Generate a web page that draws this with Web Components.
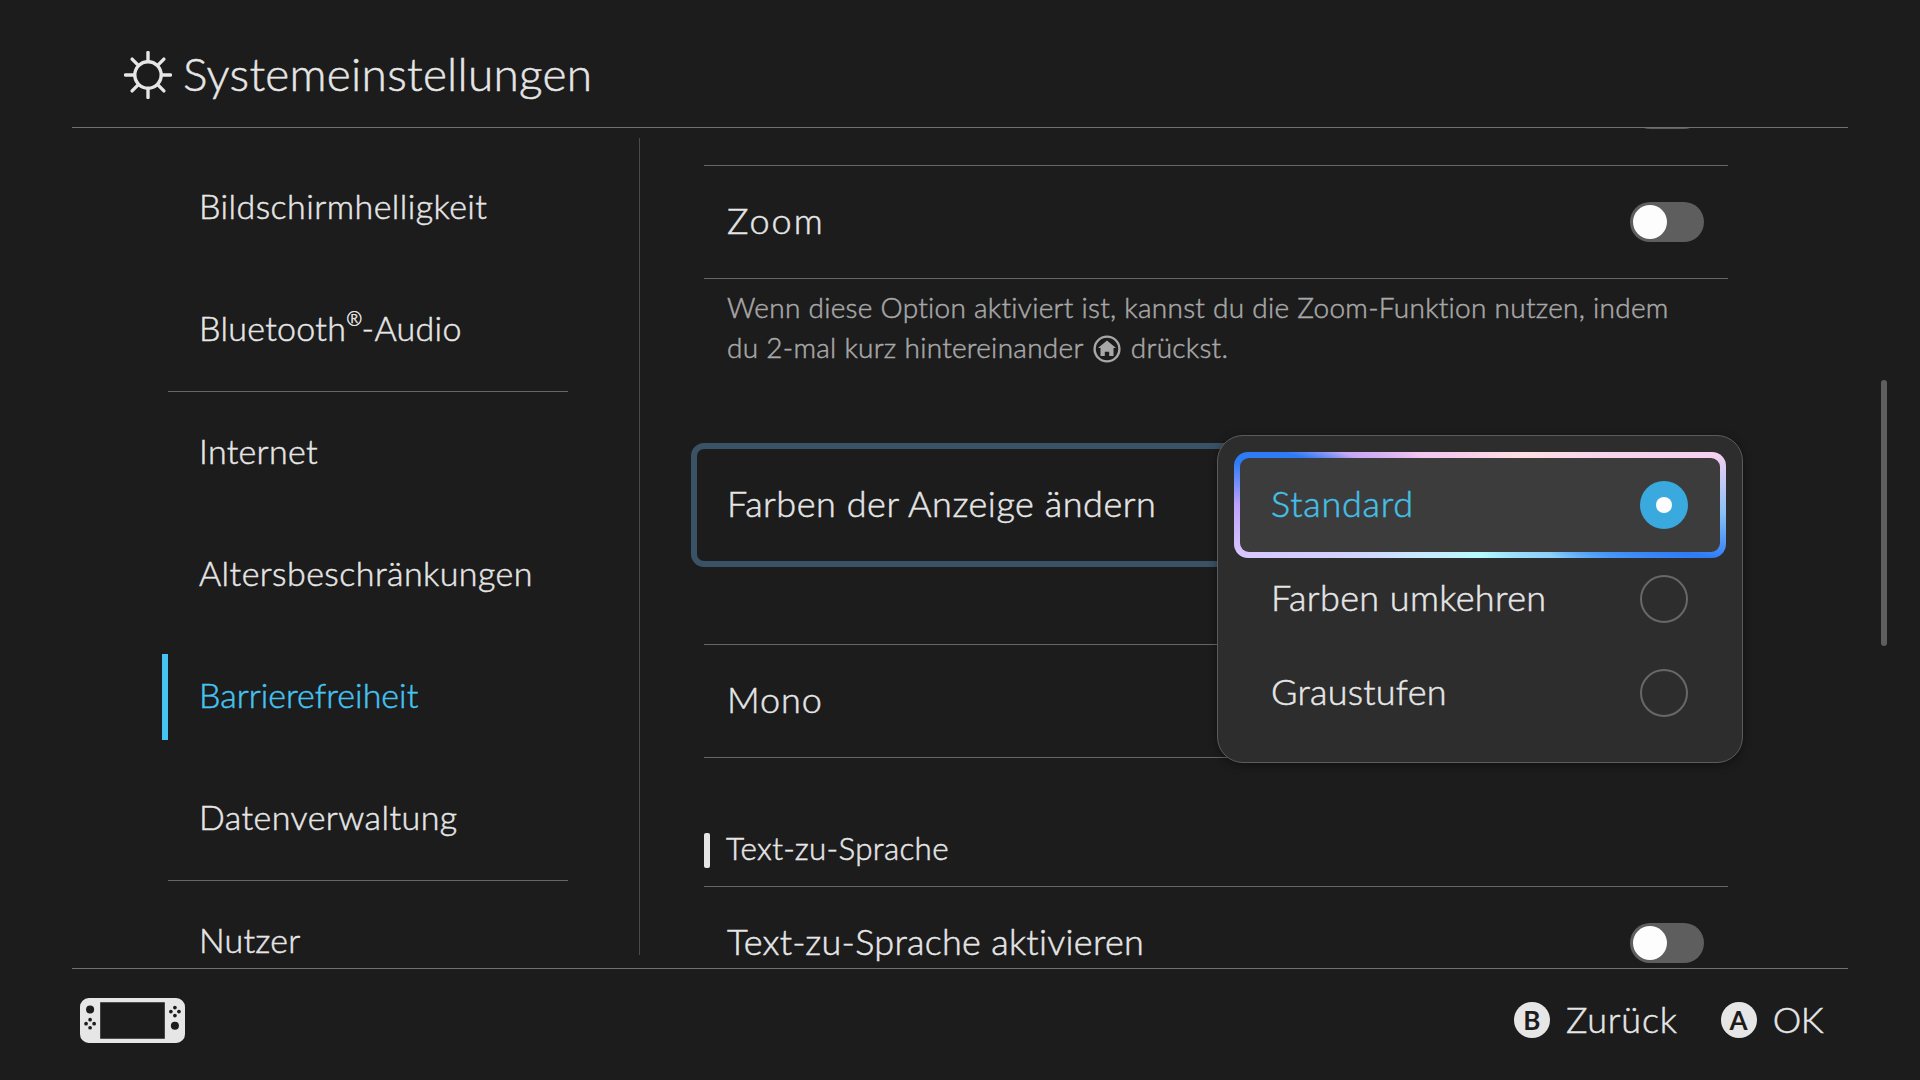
<!DOCTYPE html>
<html lang="de">
<head>
<meta charset="utf-8">
<title>Systemeinstellungen</title>
<style>
  html, body { margin: 0; padding: 0; background: #1c1c1c; }
  body { width: 1920px; height: 1080px; overflow: hidden; font-family: "Lato", "Noto Sans", sans-serif; font-weight: 300; -webkit-text-stroke: .5px; color: #e6e6e6; }
</style>
</head>
<body>
<sw-app>
  <sw-header slot="header">Systemeinstellungen</sw-header>
  <sw-sidebar slot="sidebar">
    <sw-side-item>Bildschirmhelligkeit</sw-side-item>
    <sw-side-item divider style="letter-spacing:.3px">Bluetooth<sup style="font-size:.56em;line-height:0;vertical-align:15px;margin-right:-1px">®</sup>-Audio</sw-side-item>
    <sw-side-item style="letter-spacing:.3px">Internet</sw-side-item>
    <sw-side-item>Altersbeschränkungen</sw-side-item>
    <sw-side-item active style="letter-spacing:0">Barrierefreiheit</sw-side-item>
    <sw-side-item divider>Datenverwaltung</sw-side-item>
    <sw-side-item style="letter-spacing:.2px">Nutzer</sw-side-item>
  </sw-sidebar>
  <sw-list slot="content">
    <sw-row toggle class="peek"></sw-row>
    <sw-row toggle class="zoom" style="letter-spacing:2px">Zoom</sw-row>
    <sw-note>Wenn diese Option aktiviert ist, kannst du die Zoom-Funktion nutzen, indem<br>du 2-mal kurz hintereinander <sw-home-icon></sw-home-icon> drückst.</sw-note>
    <sw-focus-row style="letter-spacing:.54px">Farben der Anzeige ändern</sw-focus-row>
    <sw-row class="mono" style="letter-spacing:.9px">Mono</sw-row>
    <sw-section>Text-zu-Sprache</sw-section>
    <sw-row toggle class="last" style="letter-spacing:.28px">Text-zu-Sprache aktivieren</sw-row>
  </sw-list>
  <sw-footer slot="footer">
    <sw-hint key="B" style="letter-spacing:.8px">Zurück</sw-hint>
    <sw-hint key="A" style="letter-spacing:-.5px">OK</sw-hint>
  </sw-footer>
  <sw-popup slot="overlay">
    <sw-option selected style="letter-spacing:.75px">Standard</sw-option>
    <sw-option style="letter-spacing:.4px">Farben umkehren</sw-option>
    <sw-option style="letter-spacing:.25px">Graustufen</sw-option>
  </sw-popup>
</sw-app>

<script>
class SwApp extends HTMLElement {
  constructor() {
    super();
    this.attachShadow({mode: 'open'});
    this.shadowRoot.innerHTML = `
      <style>
        :host { display: flex; flex-direction: column; position: relative; width: 1920px; height: 1080px; }
        main { display: flex; height: 840px; margin: 0 72px; overflow: hidden; }
        .side { width: 567px; flex: none; }
        .divider { width: 1px; flex: none; margin: 10px 0 13px; background: #4a4a4a; }
        .content { flex: none; width: 1024px; margin-left: 64px; }
        .scrollbar { position: absolute; left: 1881px; top: 380px; width: 6px; height: 266px; border-radius: 3px; background: #5e5e5e; }
      </style>
      <slot name="header"></slot>
      <main>
        <div class="side"><slot name="sidebar"></slot></div>
        <div class="divider"></div>
        <div class="content"><slot name="content"></slot></div>
      </main>
      <slot name="footer"></slot>
      <div class="scrollbar"></div>
      <slot name="overlay"></slot>
    `;
  }
}

class SwHeader extends HTMLElement {
  constructor() {
    super();
    this.attachShadow({mode: 'open'});
    var rays = '';
    for (var i = 0; i < 8; i++) {
      rays += `<line x1="24" y1="1.5" x2="24" y2="10" transform="rotate(${i * 45} 24 24)"/>`;
    }
    this.shadowRoot.innerHTML = `
      <style>
        :host { display: flex; align-items: center; gap: 11px; box-sizing: border-box; height: 128px; margin: 0 72px; padding: 25px 0 0 52px; border-bottom: 1px solid #707070; }
        svg { width: 48px; height: 48px; flex: none; margin-top: -3px; }
        .title { font-size: 46px; letter-spacing: .25px; color: #e6e6e6; margin-top: -6px; }
      </style>
      <svg viewBox="0 0 48 48" fill="none" stroke="#e6e6e6" stroke-width="3.4" stroke-linecap="round">
        <circle cx="24" cy="24" r="13.2"/>
        ${rays}
      </svg>
      <div class="title"><slot></slot></div>
    `;
  }
}

class SwSidebar extends HTMLElement {
  constructor() {
    super();
    this.attachShadow({mode: 'open'});
    this.shadowRoot.innerHTML = `
      <style>
        :host { display: block; width: 400px; margin-left: 96px; padding-top: 19px; letter-spacing: .45px; }
      </style>
      <slot></slot>
    `;
  }
}

class SwSideItem extends HTMLElement {
  constructor() {
    super();
    this.attachShadow({mode: 'open'});
    this.shadowRoot.innerHTML = `
      <style>
        :host { display: flex; align-items: center; position: relative; box-sizing: border-box; height: 122px; padding-left: 31px; font-size: 34px; color: #e6e6e6; }
        :host([divider]) { height: 123px; border-bottom: 1px solid #666; }
        :host([active]) { color: #45c3f2; }
        :host([active])::before { content: ""; position: absolute; left: -6px; top: 18px; width: 6px; height: 86px; background: #45c3f2; }
        .label { margin-bottom: 6px; }
      </style>
      <div class="label"><slot></slot></div>
    `;
  }
}

class SwToggle extends HTMLElement {
  constructor() {
    super();
    this.attachShadow({mode: 'open'});
    this.shadowRoot.innerHTML = `
      <style>
        :host { display: block; box-sizing: border-box; width: 74px; height: 40px; padding: 3px; border-radius: 20px; background: #5e5e5e; }
        .knob { width: 34px; height: 34px; border-radius: 50%; background: #fdfdfd; }
      </style>
      <div class="knob"></div>
    `;
  }
}

class SwList extends HTMLElement {
  constructor() {
    super();
    this.attachShadow({mode: 'open'});
    this.shadowRoot.innerHTML = `
      <style>
        :host { display: block; margin-top: -76px; }
      </style>
      <slot></slot>
    `;
  }
}

class SwRow extends HTMLElement {
  constructor() {
    super();
    this.attachShadow({mode: 'open'});
    var toggle = this.hasAttribute('toggle') ? '<sw-toggle></sw-toggle>' : '';
    this.shadowRoot.innerHTML = `
      <style>
        :host { display: flex; align-items: center; justify-content: space-between; box-sizing: border-box; height: 114px; padding: 0 24px 0 23px; border-bottom: 1px solid #666; font-size: 36px; color: #e6e6e6; }
        :host(.zoom) { height: 113px; }
        :host(.mono) { border-top: 1px solid #666; }
        :host(.last) { padding-bottom: 2px; }
        .label { margin-bottom: 4px; }
      </style>
      <div class="label"><slot></slot></div>
      ${toggle}
    `;
  }
}

class SwNote extends HTMLElement {
  constructor() {
    super();
    this.attachShadow({mode: 'open'});
    this.shadowRoot.innerHTML = `
      <style>
        :host { display: block; box-sizing: border-box; height: 164px; padding: 8px 23px 0; font-size: 28px; line-height: 40px; letter-spacing: .28px; color: #a8a8a8; }
      </style>
      <slot></slot>
    `;
  }
}

class SwHomeIcon extends HTMLElement {
  constructor() {
    super();
    this.attachShadow({mode: 'open'});
    this.shadowRoot.innerHTML = `
      <style>
        :host { display: inline-block; width: 28px; height: 28px; margin: 0 2px 0 2px; vertical-align: -5px; }
        svg { display: block; width: 28px; height: 28px; }
      </style>
      <svg viewBox="0 0 28 28">
        <circle cx="14" cy="14" r="12.4" fill="none" stroke="#a8a8a8" stroke-width="2.4"/>
        <path d="M14 5.5 L23 13 L20.5 13 L20.5 21 L16.2 21 L16.2 16.8 L11.8 16.8 L11.8 21 L7.5 21 L7.5 13 L5 13 Z" fill="#a8a8a8"/>
      </svg>
    `;
  }
}

class SwFocusRow extends HTMLElement {
  constructor() {
    super();
    this.attachShadow({mode: 'open'});
    this.shadowRoot.innerHTML = `
      <style>
        :host { display: flex; align-items: center; box-sizing: border-box; width: 1050px; height: 124px; margin: 0 0 77px -13px; padding-left: 30px; border: 6px solid #3a5266; border-radius: 13px; font-size: 36px; color: #e6e6e6; }
        .label { margin-bottom: 4px; }
      </style>
      <div class="label"><slot></slot></div>
    `;
  }
}

class SwSection extends HTMLElement {
  constructor() {
    super();
    this.attachShadow({mode: 'open'});
    this.shadowRoot.innerHTML = `
      <style>
        :host { display: flex; align-items: center; box-sizing: border-box; height: 129px; padding-top: 56px; border-bottom: 1px solid #666; font-size: 31.4px; letter-spacing: .33px; color: #e6e6e6; }
        .bar { width: 6px; height: 35px; margin-right: 16px; border-radius: 2px; background: #e6e6e6; }
        .label { margin-bottom: 5px; }
      </style>
      <div class="bar"></div>
      <div class="label"><slot></slot></div>
    `;
  }
}

class SwPopup extends HTMLElement {
  constructor() {
    super();
    this.attachShadow({mode: 'open'});
    this.shadowRoot.innerHTML = `
      <style>
        :host { display: block; position: absolute; left: 1217px; top: 435px; box-sizing: border-box; width: 526px; height: 328px; padding: 16px; background: #2d2d2d; border: 1px solid #5c5c5c; border-radius: 26px; box-shadow: 0 2px 10px rgba(0,0,0,.4); }
      </style>
      <slot></slot>
    `;
  }
}

class SwOption extends HTMLElement {
  constructor() {
    super();
    this.attachShadow({mode: 'open'});
    this.shadowRoot.innerHTML = `
      <style>
        :host { display: block; box-sizing: border-box; height: 94px; font-size: 36px; color: #e6e6e6; }
        .inner { display: flex; align-items: center; justify-content: space-between; box-sizing: border-box; height: 100%; padding: 0 38px 0 37px; }
        .label { margin-bottom: 4px; }
        .radio { box-sizing: border-box; width: 48px; height: 48px; border: 2.5px solid #686868; border-radius: 50%; }
        :host([selected]) { height: 106px; margin-bottom: -6px; padding: 6px; border-radius: 14px; color: #44c0e8;
          background: conic-gradient(from 0deg, #f9d3e8 0deg, #ffdfe2 45deg, #f5d0f0 78deg, #88c0f8 92deg, #2e7bf6 103deg, #4a9af8 112deg, #8cd0fb 125deg, #b5fcff 180deg, #c8e8ff 235deg, #d8c8ff 258deg, #bfa2fb 270deg, #2e7bf6 280deg, #2e7bf6 285deg, #c9a8f5 291deg, #f3c6ef 309deg, #f9d3e8 360deg); }
        :host([selected]) .inner { padding: 0 32px 0 31px; background: #3c3c3c; border-radius: 9px; }
        :host([selected]) .radio { display: flex; align-items: center; justify-content: center; border: 0; background: #3aa9dd; }
        :host([selected]) .radio::after { content: ""; width: 16px; height: 16px; border-radius: 50%; background: #fff; }
      </style>
      <div class="inner"><div class="label"><slot></slot></div><div class="radio"></div></div>
    `;
  }
}

class SwFooter extends HTMLElement {
  constructor() {
    super();
    this.attachShadow({mode: 'open'});
    this.shadowRoot.innerHTML = `
      <style>
        :host { display: flex; align-items: center; justify-content: space-between; box-sizing: border-box; height: 112px; margin: 0 72px; padding: 0 25px 9px 8px; border-top: 1px solid #707070; }
        svg { display: block; width: 105px; height: 45px; }
        .hints { display: flex; gap: 43px; }
      </style>
      <svg viewBox="0 0 312 133">
        <path fill="#e6e6e6" fill-rule="evenodd" d="M26 0H286A26 26 0 0 1 312 26V107A26 26 0 0 1 286 133H26A26 26 0 0 1 0 107V26A26 26 0 0 1 26 0ZM60 12V121H252V12Z"/>
        <g fill="#1c1c1c">
          <circle cx="30" cy="34" r="12"/>
          <circle cx="30" cy="64" r="5.5"/><circle cx="18" cy="76" r="5.5"/><circle cx="42" cy="76" r="5.5"/><circle cx="30" cy="88" r="5.5"/>
          <circle cx="282" cy="28" r="5.5"/><circle cx="270" cy="40" r="5.5"/><circle cx="294" cy="40" r="5.5"/><circle cx="282" cy="52" r="5.5"/>
          <circle cx="282" cy="82" r="12"/>
        </g>
      </svg>
      <div class="hints"><slot></slot></div>
    `;
  }
}

class SwHint extends HTMLElement {
  constructor() {
    super();
    this.attachShadow({mode: 'open'});
    this.shadowRoot.innerHTML = `
      <style>
        :host { display: flex; align-items: center; gap: 16px; font-size: 36px; color: #e6e6e6; }
        .key { display: flex; align-items: center; justify-content: center; width: 36px; height: 36px; border-radius: 50%; background: #e6e6e6; color: #1c1c1c; font-size: 26px; font-weight: 700; letter-spacing: 0; -webkit-text-stroke: 0; }
        .label { margin-bottom: 2px; }
      </style>
      <div class="key">${this.getAttribute('key')}</div>
      <div class="label"><slot></slot></div>
    `;
  }
}

customElements.define('sw-app', SwApp);
customElements.define('sw-header', SwHeader);
customElements.define('sw-sidebar', SwSidebar);
customElements.define('sw-side-item', SwSideItem);
customElements.define('sw-toggle', SwToggle);
customElements.define('sw-list', SwList);
customElements.define('sw-row', SwRow);
customElements.define('sw-note', SwNote);
customElements.define('sw-home-icon', SwHomeIcon);
customElements.define('sw-focus-row', SwFocusRow);
customElements.define('sw-section', SwSection);
customElements.define('sw-popup', SwPopup);
customElements.define('sw-option', SwOption);
customElements.define('sw-footer', SwFooter);
customElements.define('sw-hint', SwHint);
</script>
</body>
</html>
